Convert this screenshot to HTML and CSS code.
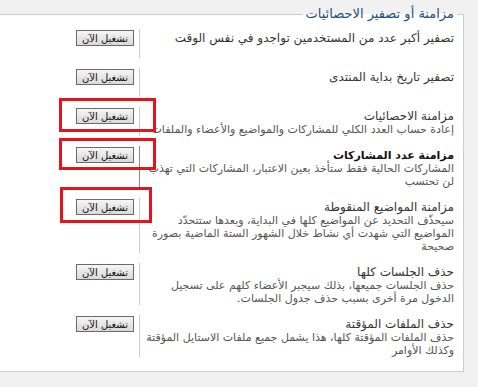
FILE: index.html
```html
<!DOCTYPE html>
<html lang="ar" dir="rtl">

<head>
    <meta charset="UTF-8">
    <meta name="viewport" content="width=device-width, initial-scale=1.0">
    <title>مزامنة أو تصفير الاحصائيات</title>
    <link rel="stylesheet" href="styles.css">
</head>

<body>
    <fieldset class="stats-box">
        <legend>مزامنة أو تصفير الاحصائيات</legend>

        <div class="task">
            <div class="task-text">
                <p class="task-title">تصفير أكبر عدد من المستخدمين تواجدو في نفس الوقت</p>
            </div>
            <div class="task-action"><button class="run-button">تشغيل الآن</button></div>
        </div>

        <div class="task">
            <div class="task-text">
                <p class="task-title">تصفير تاريخ بداية المنتدى</p>
            </div>
            <div class="task-action"><button class="run-button">تشغيل الآن</button></div>
        </div>

        <div class="task">
            <div class="task-text">
                <p class="task-title">مزامنة الاحصائيات</p>
                <p class="task-desc">إعادة حساب العدد الكلي للمشاركات والمواضيع والأعضاء والملفات</p>
            </div>
            <div class="task-action"><button class="run-button">تشغيل الآن</button></div>
        </div>

        <div class="task">
            <div class="task-text">
                <p class="task-title strong">مزامنة عدد المشاركات</p>
                <p class="task-desc">المشاركات الحالية فقط ستأخذ بعين الاعتبار، المشاركات التي تهذب لن تحتسب</p>
            </div>
            <div class="task-action dark-line"><button class="run-button">تشغيل الآن</button></div>
        </div>

        <div class="task">
            <div class="task-text">
                <p class="task-title">مزامنة المواضيع المنقوطة</p>
                <p class="task-desc">سيحذّف التحديد عن المواضيع كلها في البداية، وبعدها ستتحدّد المواضيع التي شهدت أي نشاط خلال الشهور الستة الماضية بصورة صحيحة</p>
            </div>
            <div class="task-action"><button class="run-button">تشغيل الآن</button></div>
        </div>

        <div class="task">
            <div class="task-text">
                <p class="task-title">حذف الجلسات كلها</p>
                <p class="task-desc">حذف الجلسات جميعها، بذلك سيجبر الأعضاء كلهم على تسجيل الدخول مرة أخرى بسبب حذف جدول الجلسات.</p>
            </div>
            <div class="task-action"><button class="run-button">تشغيل الآن</button></div>
        </div>

        <div class="task">
            <div class="task-text">
                <p class="task-title">حذف الملفات المؤقتة</p>
                <p class="task-desc">حذف الملفات المؤقتة كلها، هذا يشمل جميع ملفات الاستايل المؤقتة وكذلك الأوامر</p>
            </div>
            <div class="task-action"><button class="run-button">تشغيل الآن</button></div>
        </div>
    </fieldset>

    <!-- annotation boxes -->
    <div class="mark mark-1"></div>
    <div class="mark mark-2"></div>
    <div class="mark mark-3"></div>
</body>

</html>
```

FILE: styles.css
```css
body {
    margin: 0;
    font-family: "DejaVu Sans", sans-serif;
    font-size: 11px;
    background-color: #f1f1f1;
    color: #333;
}

.stats-box {
    margin: 6px 14px 14px -3px;
    padding: 7px 9px 4px 0;
    border: 1px solid #cccccc;
    background-color: white;
    min-width: 0;
}

.stats-box legend {
    padding: 0 3px;
    margin-right: -3px;
    font-size: 13px;
    line-height: 16px;
    color: #1d4f80;
}

.task {
    display: flex;
    min-height: 29px;
    margin-bottom: 10px;
}

.task-text {
    width: 310px;
    padding: 3px 0 0 4px;
    line-height: 13px;
}

.task-text p {
    margin: 0;
}

.task-title {
    font-size: 12px;
    color: #333;
}

.task-title.strong {
    font-size: 11px;
    color: #111;
    font-weight: bold;
}

.task-desc {
    color: #555;
}

.task-action {
    border-right: 1px solid #cccccc;
    padding-right: 5px;
}

.task-action.dark-line {
    border-right-color: #888888;
}

.run-button {
    width: 58px;
    height: 16px;
    padding: 0;
    margin-top: 1px;
    font-family: "DejaVu Sans", sans-serif;
    font-size: 10px;
    color: #111;
    background: linear-gradient(#f6f6f6, #d9d9d9);
    border: 1px solid #6a6a6a;
    cursor: pointer;
}

.mark {
    position: absolute;
    border: 3px solid #e3141b;
}

.mark-1 {
    left: 59px;
    top: 98px;
    width: 91px;
    height: 28px;
}

.mark-2 {
    left: 59px;
    top: 138px;
    width: 91px;
    height: 26px;
}

.mark-3 {
    left: 60px;
    top: 187px;
    width: 86px;
    height: 30px;
}
```
